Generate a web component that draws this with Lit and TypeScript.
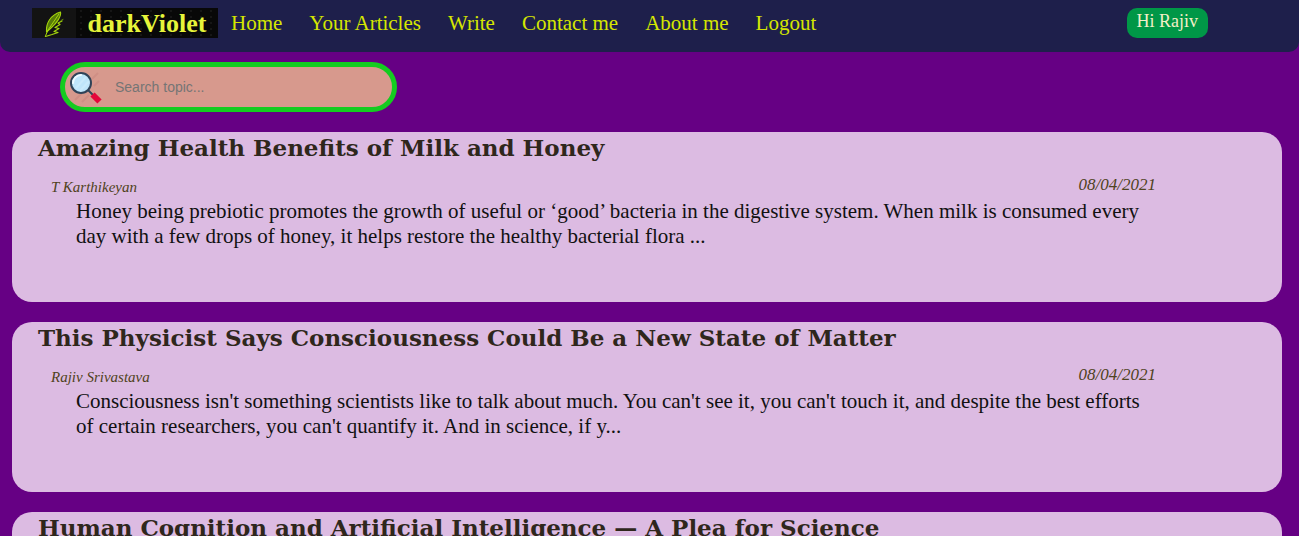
import { LitElement, html, css } from "lit";
import { customElement, property } from "lit/decorators.js";

interface Article {
  title: string;
  author: string;
  date: string;
  excerpt: string;
}

const links = ["Home", "Your Articles", "Write", "Contact me", "About me", "Logout"];

const articles: Article[] = [
  {
    title: "Amazing Health Benefits of Milk and Honey",
    author: "T Karthikeyan",
    date: "08/04/2021",
    excerpt:
      "Honey being prebiotic promotes the growth of useful or ‘good’ bacteria in the digestive system. When milk is consumed every\nday with a few drops of honey, it helps restore the healthy bacterial flora ...",
  },
  {
    title: "This Physicist Says Consciousness Could Be a New State of Matter",
    author: "Rajiv Srivastava",
    date: "08/04/2021",
    excerpt:
      "Consciousness isn't something scientists like to talk about much. You can't see it, you can't touch it, and despite the best efforts\nof certain researchers, you can't quantify it. And in science, if y...",
  },
  {
    title: "Human Cognition and Artificial Intelligence — A Plea for Science",
    author: "",
    date: "",
    excerpt: "",
  },
];

@customElement("article-card")
export class ArticleCard extends LitElement {
  @property({ attribute: false }) article!: Article;

  static styles = css`
    :host {
      display: block;
    }
    .card {
      box-sizing: border-box;
      min-height: 170px;
      padding: 0 80px 20px 26px;
      border-radius: 20px;
      background: #dcbbe2;
    }
    .title {
      margin: 0;
      font: bold 23px/32px "DejaVu Serif", serif;
      color: #2f271c;
    }
    .meta {
      display: flex;
      justify-content: space-between;
      align-items: flex-start;
      margin-top: 11px;
      padding: 0 46px 0 13px;
      font-style: italic;
      color: #4f4220;
    }
    .author {
      font-size: 15px;
      line-height: 24px;
    }
    .date {
      font-size: 17px;
      line-height: 20px;
    }
    .excerpt {
      margin: 0;
      padding-left: 38px;
      font-size: 21px;
      line-height: 25px;
      white-space: pre-line;
      color: #111;
    }
  `;

  render() {
    const a = this.article;
    return html`<article class="card">
      <h2 class="title">${a.title}</h2>
      <div class="meta">
        <span class="author">${a.author}</span>
        <time class="date">${a.date}</time>
      </div>
      <p class="excerpt">${a.excerpt}</p>
    </article>`;
  }
}

@customElement("app-root")
export class AppRoot extends LitElement {
  static styles = css`
    :host {
      display: block;
      height: 100vh;
      overflow: hidden;
      background: #660084;
      font-family: "Liberation Serif", serif;
    }
    .bar {
      display: flex;
      align-items: flex-start;
      box-sizing: border-box;
      min-height: 52px;
      padding: 8px 91px 8px 32px;
      border-radius: 0 0 10px 10px;
      background: #1e1f4b;
    }
    .brand {
      display: flex;
      width: 186px;
      height: 30px;
      margin-right: 13px;
      background: #080808;
      color: #e6f53a;
      text-decoration: none;
    }
    .quill {
      width: 44px;
      height: 30px;
      background: #131313;
    }
    .name {
      flex: 1;
      font-size: 26px;
      font-weight: bold;
      line-height: 32px;
      text-align: center;
      background: radial-gradient(#161616 1px, transparent 1px) 0 0 / 10px 6px;
    }
    .links {
      display: flex;
      flex: 1;
      gap: 27px;
    }
    .link {
      font-size: 21px;
      line-height: 30px;
      color: #d5e600;
      text-decoration: none;
      white-space: nowrap;
    }
    .user {
      height: 30px;
      padding: 0 10px 4px;
      border: 0;
      border-radius: 10px;
      background: #009747;
      color: #f3efc8;
      font: 18px/26px "Liberation Serif", serif;
    }
    .search {
      display: flex;
      align-items: center;
      box-sizing: border-box;
      width: 337px;
      height: 50px;
      margin: 10px 0 20px 60px;
      border: 5px solid #14cc20;
      border-radius: 25px;
      background: #d7998d;
    }
    .lens {
      flex: none;
      width: 40px;
      height: 40px;
    }
    .field {
      flex: 1;
      min-width: 0;
      padding: 0 20px 0 10px;
      border: 0;
      outline: 0;
      background: none;
      font: 14px/20px "Liberation Sans", sans-serif;
    }
    .field::placeholder {
      color: #757575;
    }
    .list {
      display: grid;
      gap: 20px;
      padding: 0 17px 20px 12px;
    }
  `;

  render() {
    return html`
      <header>
        <nav class="bar">
          <a class="brand" href="#">
            <svg class="quill" viewBox="0 0 44 30" fill="none" stroke="#a5d60c" stroke-linecap="round" stroke-linejoin="round" aria-hidden="true">
              <path d="M14.500 23C14 16 18 7 28.500 4C29.500 8 25 15 19 20L14.500 24Z" fill="#587b08" stroke-width="1.100" />
              <path d="M13.500 28L16 22L27 6" stroke-width="1" />
              <path d="M13.500 28.500L20 26.500L26 24.500L22 23.500L27 20.500L23 19.500L28 16.500L26 15L30 13" stroke-width="1.200" />
              <path d="M29 12.500L31 11.500" stroke="#6f940c" stroke-width="1" />
            </svg>
            <span class="name">darkViolet</span>
          </a>
          <div class="links">
            ${links.map((l) => html`<a class="link" href="#">${l}</a>`)}
          </div>
          <button class="user" type="button">Hi Rajiv</button>
        </nav>
      </header>
      <main>
        <label class="search">
          <svg class="lens" viewBox="0 0 40 40" aria-hidden="true">
            <path d="M10 33L17 26M17 35L24 28M27 12L33 6M29 19L34 14" stroke="#cf8f85" stroke-width="2" />
            <path d="M23 23L28 28" stroke="#31465a" stroke-width="2" />
            <path d="M27.500 27.500L34.500 34.500" stroke="#e4063a" stroke-width="6" stroke-linejoin="round" />
            <circle cx="16" cy="16" r="10" fill="#bfe5fa" stroke="#2f4358" stroke-width="2" />
            <path d="M8 16A8 8 0 0 1 16 8" fill="none" stroke="#eefaff" stroke-width="2" stroke-linecap="round" />
            <path d="M11 21L21 10M15 24L24 14" stroke="#c9eafb" stroke-width="2" />
          </svg>
          <input class="field" type="search" placeholder="Search topic..." aria-label="Search topic" />
        </label>
        <section class="list">
          ${articles.map((a) => html`<article-card .article=${a}></article-card>`)}
        </section>
      </main>
    `;
  }
}
